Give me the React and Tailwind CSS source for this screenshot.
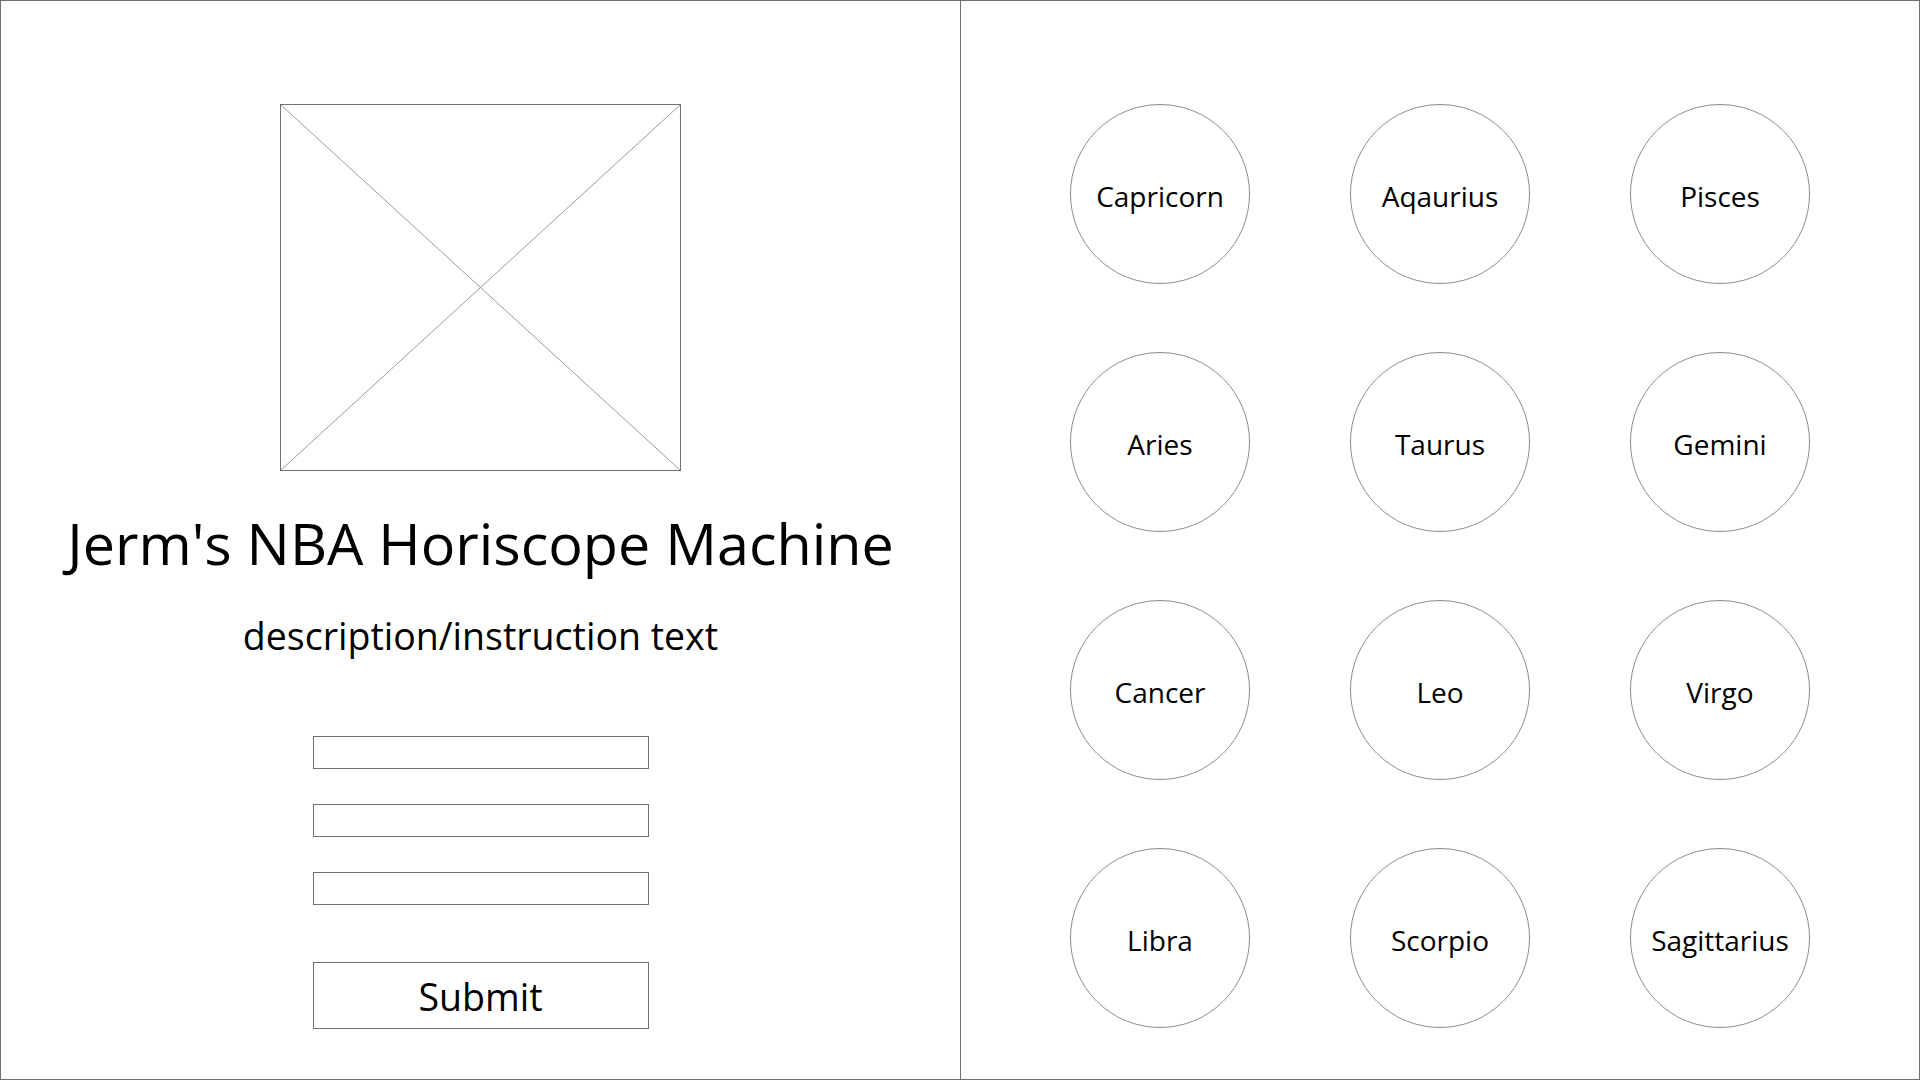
const signs = [
    "Capricorn", "Aqaurius", "Pisces",
    "Aries", "Taurus", "Gemini",
    "Cancer", "Leo", "Virgo",
    "Libra", "Scorpio", "Sagittarius",
]

function Placeholder() {
    return <div className="relative w-[401px] h-[367px] border border-[#707070]">
        <svg className="absolute inset-0 w-full h-full" viewBox="0 0 100 100" preserveAspectRatio="none">
            <line x1="0" y1="0" x2="100" y2="100" stroke="#9a9a9a" strokeWidth="1" vectorEffect="non-scaling-stroke"/>
            <line x1="100" y1="0" x2="0" y2="100" stroke="#9a9a9a" strokeWidth="1" vectorEffect="non-scaling-stroke"/>
        </svg>
    </div>
}

export default function App() {
    return <div className="w-[1920px] h-[1080px] flex border border-[#707070] bg-white text-black"
                style={{fontFamily: '"Open Sans", "Noto Sans", sans-serif'}}>
        <div className="w-[960px] shrink-0 border-r border-[#707070] flex flex-col items-center pt-[103px]">
            <Placeholder/>
            <h1 className="mt-[44px] text-[57.5px] leading-[56px] font-normal whitespace-nowrap">Jerm's NBA Horiscope Machine</h1>
            <p className="mt-[47px] text-[37.5px] leading-[36px] whitespace-nowrap">description/instruction text</p>
            <form className="mt-[82px] flex flex-col items-center gap-[35px]" onSubmit={e => e.preventDefault()}>
                <input className="w-[336px] h-[33px] border border-[#707070] outline-none px-2" type="text"/>
                <input className="w-[336px] h-[33px] border border-[#707070] outline-none px-2" type="text"/>
                <input className="w-[336px] h-[33px] border border-[#707070] outline-none px-2" type="text"/>
                <button type="submit"
                        className="mt-[22px] w-[336px] h-[67px] border border-[#707070] bg-white text-[37.5px] leading-none flex items-center justify-center pt-[2px]">
                    Submit
                </button>
            </form>
        </div>
        <div className="flex-1 pt-[103px] flex justify-center">
            <div className="grid grid-cols-[180px_180px_180px] gap-x-[100px] gap-y-[68px] content-start">
                {signs.map(sign =>
                    <button key={sign}
                            className="w-[180px] h-[180px] rounded-full border border-[#8c8c8c] bg-white flex items-center justify-center text-[28px] leading-none pt-[3px]">
                        {sign}
                    </button>
                )}
            </div>
        </div>
    </div>
}
